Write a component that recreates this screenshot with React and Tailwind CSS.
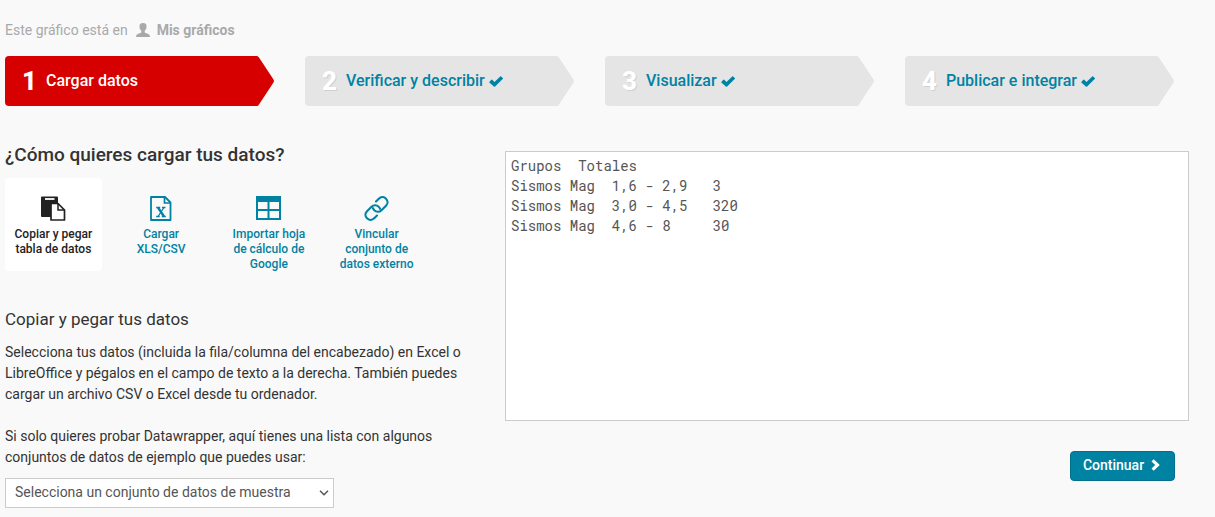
import React from "react";

function UserIcon() {
  return (
    <svg viewBox="0 0 14 14" className="h-[14px] w-[14px] shrink-0" fill="currentColor" aria-hidden="true">
      <path d="M7 0C4.700 0 3.500 1.200 3.500 3.200c0 .5.1 1 .2 1.400-.3.3-.1 1.200.4 1.500.2.7.7 1.300 1.200 1.700v1.500c-.2.700-1.400.9-2.900 1.400C.9 11.200.1 11.700 0 14h14c-.1-2.300-.9-2.800-2.400-3.300-1.500-.5-2.700-.7-2.900-1.400V7.800c.5-.4 1-1 1.200-1.700.5-.3.7-1.200.4-1.500.1-.4.2-.9.2-1.400C10.500 1.200 9.300 0 7 0z" />
    </svg>
  );
}

function CheckIcon() {
  return (
    <svg viewBox="0 0 14 11" className="h-[11px] w-[14px] shrink-0" fill="currentColor" aria-hidden="true">
      <path d="M.3 5.900 2.300 3.700Q2.800 3.400 3.200 3.800L5.500 6 11.200.4Q11.700 0 12.100.4L13.800 2.100Q14.200 2.600 13.700 3.100L6.100 10.500Q5.500 11 4.900 10.500L.3 6.600Q0 6.200.3 5.900z" />
    </svg>
  );
}

function ChevronIcon() {
  return (
    <svg viewBox="0 0 9 12" className="h-3 w-[9px] shrink-0" fill="currentColor" aria-hidden="true">
      <path d="M2.700.3 8.300 5.500Q8.700 6 8.300 6.500L2.700 11.700 .5 9.600 4.200 6 .5 2.400z" />
    </svg>
  );
}

function PasteIcon() {
  return (
    <svg viewBox="0 0 25 25" className="h-[25px] w-[25px]" fill="none" aria-hidden="true">
      <path d="M1 .5h15a1 1 0 0 1 1 1V7h-7v14H1a1 1 0 0 1-1-1V1.500a1 1 0 0 1 1-1z" fill="currentColor" />
      <path d="M4 3h9.500" stroke="#fff" strokeWidth="1.800" />
      <path d="M10 7.500h7l6.500 6.500v10H10z" fill="#fff" stroke="currentColor" strokeWidth="1.700" strokeLinejoin="round" />
      <path d="M17 7.500v6.500h6.500" stroke="currentColor" strokeWidth="1.500" />
    </svg>
  );
}

function SheetFileIcon() {
  return (
    <svg viewBox="0 0 22 25" className="h-[25px] w-[22px]" fill="none" stroke="currentColor" aria-hidden="true">
      <path d="M1 1h14l5.500 5.500V24H1z" strokeWidth="1.800" strokeLinejoin="round" />
      <path d="M14.500 1v6h6" strokeWidth="1.700" />
      <path d="m8 11.500 6 9" strokeWidth="2.300" />
      <path d="m14 11.500-6 9M6.200 11.500h4M12 11.500h3.500M6.200 20.500h3.500M11.800 20.500h4" strokeWidth="1.300" />
    </svg>
  );
}

function TableIcon() {
  return (
    <svg viewBox="0 0 25 24" className="h-6 w-[25px]" aria-hidden="true">
      <path fill="currentColor" fillRule="evenodd" d="M0 0h25v24H0zM2 6v7h9.500V6zM13.500 6v7H23V6zM2 15v7h9.500v-7zM13.500 15v7H23v-7z" />
    </svg>
  );
}

function LinkIcon() {
  return (
    <svg viewBox="0 0 25 25" className="h-[25px] w-[25px]" fill="none" stroke="currentColor" strokeWidth="2.100" strokeLinecap="round" aria-hidden="true">
      <path d="M12 5.500 14.500 3c3-3 6-1.800 7.500-.3 1.900 1.900 2.200 4.800 0 7l-4.500 4.500c-2.200 2.200-5.300 1.900-7.200 0-.7-.7-1.100-1.300-1.400-2" />
      <path d="m13 19.500-2.500 2.500c-3 3-6 1.800-7.500.3-1.900-1.900-2.200-4.800 0-7l4.500-4.500c2.200-2.200 5.300-1.900 7.200 0 .7.7 1.100 1.300 1.400 2" />
    </svg>
  );
}

const steps = [
  { number: 1, label: "Cargar datos", active: true },
  { number: 2, label: "Verificar y describir" },
  { number: 3, label: "Visualizar" },
  { number: 4, label: "Publicar e integrar" },
];

const methods = [
  { lines: ["Copiar y pegar", "tabla de datos"], Icon: PasteIcon, active: true },
  { lines: ["Cargar", "XLS/CSV"], Icon: SheetFileIcon },
  { lines: ["Importar hoja", "de cálculo de", "Google"], Icon: TableIcon },
  { lines: ["Vincular", "conjunto de", "datos externo"], Icon: LinkIcon },
];

const initialData = `Grupos  Totales
Sismos Mag  1,6 - 2,9   3
Sismos Mag  3,0 - 4,5   320
Sismos Mag  4,6 - 8     30`;

function Step({ number, label, active }) {
  return (
    <li>
      <a
        href="#"
        aria-current={active ? "step" : undefined}
        className={active ? "flex h-[50px] text-[#d70000]" : "flex h-[50px] text-[#e5e5e5]"}
      >
        <span className="flex flex-1 items-center rounded-l bg-current pl-[17px]">
          <span
            className={
              active
                ? "w-6 text-[26px] leading-none font-extrabold text-white"
                : "w-6 text-[26px] leading-none font-extrabold text-white [text-shadow:1px_1px_0_#d0d0d0]"
            }
          >
            {number}
          </span>
          <span className={active ? "text-base font-medium text-white" : "text-base font-medium text-[#0082a3]"}>
            {label}
          </span>
          {!active && (
            <span className="pl-1 text-[#0082a3]">
              <CheckIcon />
            </span>
          )}
        </span>
        <svg viewBox="0 0 18 50" className="h-[50px] w-[18px]" fill="currentColor" aria-hidden="true">
          <path d="M0 0Q1 0 2 1.500L16.500 23.500Q17.500 25 16.500 26.500L2 48.500Q1 50 0 50z" />
        </svg>
      </a>
    </li>
  );
}

export default function App() {
  return (
    <div className="min-h-screen bg-[#f9f9f9] pt-5 pl-[5px] font-[Roboto,sans-serif] text-sm text-[#333333]">
      <nav className="flex h-5 items-center text-[#a9a9a9]">
        <span>Este gráfico está en</span>
        <a href="#" className="ml-2 flex items-center gap-[7px] font-bold">
          <UserIcon />
          Mis gráficos
        </a>
      </nav>

      <ol className="mt-4 mr-10 grid grid-cols-4 gap-[30px]">
        {steps.map((step) => (
          <Step key={step.number} {...step} />
        ))}
      </ol>

      <main className="flex pt-[35px] pr-[26px]">
        <section className="w-[500px] shrink-0 pr-8">
          <h1 className="text-[19px] leading-[27px] font-medium">¿Cómo quieres cargar tus datos?</h1>
          <div className="mt-[10px] grid w-[420px] grid-cols-4 items-start gap-[11px]">
            {methods.map(({ lines, Icon, active }) => (
              <button
                key={lines[0]}
                type="button"
                className={
                  active
                    ? "flex h-[93px] flex-col items-center rounded bg-white pt-[18px] text-xs leading-[15px] font-medium text-[#222222]"
                    : "flex h-[93px] flex-col items-center rounded pt-[18px] text-xs leading-[15px] font-medium text-[#0082a3]"
                }
              >
                <span className="flex h-[31px] shrink-0">
                  <Icon />
                </span>
                {lines.map((line) => (
                  <span key={line} className="whitespace-nowrap">{line}</span>
                ))}
              </button>
            ))}
          </div>

          <h2 className="mt-[35px] text-[17px] leading-[27px]">Copiar y pegar tus datos</h2>
          <p className="mt-[9px] leading-[21px]">
            Selecciona tus datos (incluida la fila/columna del encabezado) en Excel o LibreOffice y pégalos en el campo de
            texto a la derecha. También puedes cargar un archivo CSV o Excel desde tu ordenador.
          </p>
          <label htmlFor="sample" className="mt-[21px] block leading-[21px]">
            Si solo quieres probar Datawrapper, aquí tienes una lista con algunos conjuntos de datos de ejemplo que puedes
            usar:
          </label>
          <div className="mt-[10px] grid w-[329px] items-center">
            <select
              id="sample"
              className="col-start-1 row-start-1 h-[30px] appearance-none border border-[#cccccc] bg-white pr-6 pb-[2px] pl-[9px] text-[#555555]"
            >
              <option>Selecciona un conjunto de datos de muestra</option>
            </select>
            <svg viewBox="0 0 10 6" className="pointer-events-none col-start-1 row-start-1 mr-[5px] h-[6px] w-[10px] justify-self-end" fill="none" stroke="#555555" strokeWidth="1.500" aria-hidden="true">
              <path d="M1 .8 5 4.800 9 .8" />
            </svg>
          </div>
        </section>

        <section className="flex min-w-0 flex-1 flex-col pt-[10px]">
          <textarea
            aria-label="Datos"
            defaultValue={initialData}
            spellCheck={false}
            className="block h-[270px] w-full resize-none border border-[#cccccc] bg-white px-[5px] py-1 font-['Roboto_Mono','DejaVu_Sans_Mono',monospace] text-sm leading-5 text-[#555555]"
          />
          <button
            type="button"
            className="mt-[30px] mr-[14px] flex h-[30px] w-[105px] items-center justify-center gap-[7px] self-end rounded border border-[#00708c] bg-[#0082a3] pr-[2px] pb-[2px] font-medium text-white"
          >
            Continuar
            <ChevronIcon />
          </button>
        </section>
      </main>
    </div>
  );
}
